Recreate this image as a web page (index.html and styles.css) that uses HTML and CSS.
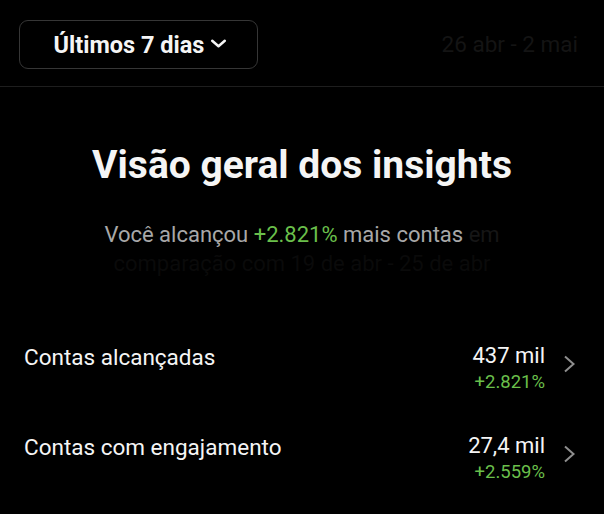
FILE: index.html
```html
<!DOCTYPE html>
<html lang="pt">
<head>
<meta charset="utf-8">
<link rel="stylesheet" href="styles.css">
</head>
<body>
<div class="page">
  <header class="topbar">
    <button class="range-btn">Últimos 7 dias
      <svg class="chev-down" viewBox="0 0 18 10" width="17" height="9"><path d="M2 2 L9 8 L16 2" fill="none" stroke="#f5f5f5" stroke-width="2.8" stroke-linecap="round" stroke-linejoin="round"/></svg>
    </button>
    <span class="dates">26 abr - 2 mai</span>
  </header>
  <div class="divider"></div>
  <section class="overview">
    <h1 class="title">Visão geral dos insights</h1>
    <p class="subtitle">Você alcançou <span class="up">+2.821%</span> mais contas <span class="faint">em</span><br><span class="faint2">comparação com 19 de abr - 25 de abr</span></p>
  </section>
  <ul class="metrics">
    <li class="metric">
      <span class="label">Contas alcançadas</span>
      <span class="values"><span class="value">437 mil</span><span class="delta">+2.821%</span></span>
      <svg class="chev" viewBox="0 0 13 18" width="13" height="18"><path d="M2 1.5 L10.5 9 L2 16.5" fill="none" stroke="#8e8e8e" stroke-width="2"/></svg>
    </li>
    <li class="metric">
      <span class="label">Contas com engajamento</span>
      <span class="values"><span class="value">27,4 mil</span><span class="delta">+2.559%</span></span>
      <svg class="chev" viewBox="0 0 13 18" width="13" height="18"><path d="M2 1.5 L10.5 9 L2 16.5" fill="none" stroke="#8e8e8e" stroke-width="2"/></svg>
    </li>
  </ul>
</div>
</body>
</html>
```
FILE: styles.css
```css
html, body {
  margin: 0;
  padding: 0;
  background: #000;
}
body {
  font-family: Roboto, "Liberation Sans", sans-serif;
  color: #f5f5f5;
  width: 604px;
  height: 514px;
  overflow: hidden;
}
.topbar {
  display: flex;
  align-items: center;
  justify-content: space-between;
  padding: 20px 26px 0 19px;
  height: 69px;
  box-sizing: border-box;
}
.range-btn {
  display: flex;
  align-items: center;
  gap: 6px;
  height: 49px;
  width: 239px;
  justify-content: center;
  background: #000;
  border: 1.5px solid #363636;
  border-radius: 9px;
  color: #f5f5f5;
  font-family: Roboto, "Liberation Sans", sans-serif;
  font-weight: 700;
  font-size: 23.5px;
  padding: 0 0 0 4px;
}
.chev-down { margin-top: -3px; }
.dates {
  color: #141414;
  font-size: 22.5px;
  margin-top: -2px;
}
.divider {
  height: 1px;
  background: #1e1e1e;
  margin-top: 17px;
}
.overview {
  text-align: center;
  padding-top: 55px;
}
.title {
  margin: 0;
  font-size: 39px;
  font-weight: 700;
  line-height: 46px;
  color: #f5f5f5;
}
.subtitle {
  margin: 32px 0 0;
  font-size: 22px;
  line-height: 29px;
  color: #a8a8a8;
}
.up { color: #6abf4b; }
.faint { color: #161616; }
.faint2 { color: #0a0a0a; }
.metrics {
  list-style: none;
  margin: 64px 0 0;
  padding: 0 28px 0 24px;
}
.metric {
  display: flex;
  align-items: flex-start;
  height: 90px;
}
.label {
  flex: 1;
  font-size: 22.5px;
  line-height: 27px;
  padding-top: 2px;
}
.values {
  display: flex;
  flex-direction: column;
  align-items: flex-end;
}
.value { font-size: 22px; line-height: 27px; }
.delta { font-size: 18.5px; line-height: 22px; margin-top: 2px; color: #6abf4b; }
.chev {
  margin-left: 18px;
  margin-top: 13px;
}
```
